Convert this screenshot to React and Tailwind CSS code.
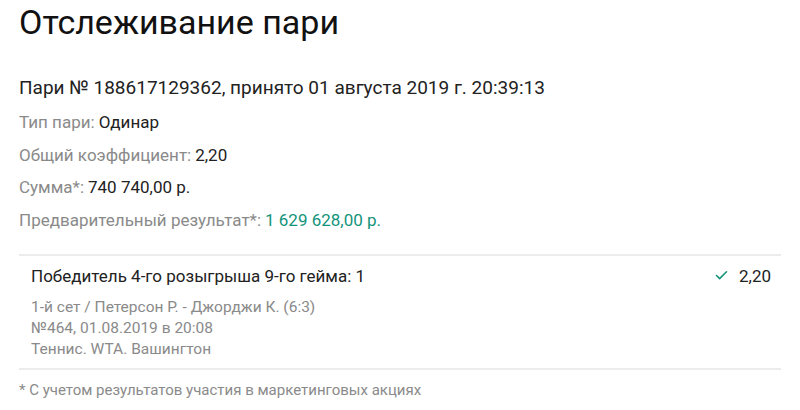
import { Check } from "lucide-react";

function Field({ label, children, green }) {
  return (
    <div className="h-[32.4px] flex items-center text-[17px]">
      <span className="text-[#8a8a8a]">{label}</span>
      <span className={green ? "ml-1 text-[#13937a]" : "ml-1 text-[#222]"}>
        {children}
      </span>
    </div>
  );
}

export default function App() {
  return (
    <div className="w-[800px] h-[410px] bg-white px-[19px] font-['Roboto',sans-serif] overflow-hidden">
      {/* Title */}
      <h1 className="text-[34px] leading-[34px] pt-[5px] text-[#111]">
        Отслеживание пари
      </h1>

      <div className="mt-[36px] text-[19px] text-[#222] leading-none h-[24px] flex items-center">
        Пари № 188617129362, принято 01 августа 2019 г. 20:39:13
      </div>

      <div className="mt-[8px]">
        <Field label="Тип пари:">Одинар</Field>
        <Field label="Общий коэффициент:">2,20</Field>
        <Field label="Сумма*:">740 740,00 р.</Field>
        <Field label="Предварительный результат*:" green>
          1 629 628,00 р.
        </Field>
      </div>

      {/* Event */}
      <div className="mt-[17px] border-t-2 border-b-2 border-[#ececec] pl-[12px] pr-[10px] pt-[10px] pb-[7.5px]">
        <div className="flex items-center justify-between text-[17px] leading-[20px] text-[#222]">
          <span>Победитель 4-го розыгрыша 9-го гейма: 1</span>
          <span className="flex items-center gap-[10px]">
            <Check size={15} strokeWidth={2.5} className="text-[#13937a]" />
            2,20
          </span>
        </div>
        <div className="mt-[11.5px] text-[15.5px] text-[#8a8a8a] leading-[21px]">
          <div>1-й сет / Петерсон Р. - Джорджи К. (6:3)</div>
          <div>№464, 01.08.2019 в 20:08</div>
          <div>Теннис. WTA. Вашингтон</div>
        </div>
      </div>

      <div className="mt-[10px] text-[15px] leading-[20px] text-[#8a8a8a]">
        * С учетом результатов участия в маркетинговых акциях
      </div>
    </div>
  );
}
